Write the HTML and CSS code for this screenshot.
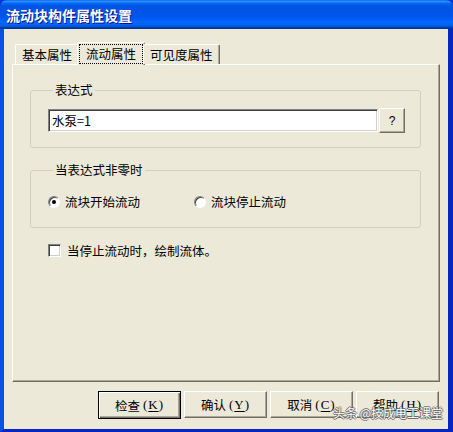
FILE: index.html
```html
<!DOCTYPE html>
<html lang="zh">
<head>
<meta charset="utf-8">
<link rel="stylesheet" href="styles.css">
</head>
<body>
<div class="window">
  <div class="titlebar"><span class="title">流动块构件属性设置</span></div>
  <div class="frame">
    <div class="client">
      <div class="tabs">
        <div class="tab">基本属性</div>
        <div class="tab active"><span class="focus">流动属性</span></div>
        <div class="tab">可见度属性</div>
      </div>
      <div class="panel">
        <fieldset class="group g1">
          <legend>表达式</legend>
          <div class="exprrow">
            <div class="input">水泵=1</div>
            <div class="btn qbtn">?</div>
          </div>
        </fieldset>
        <fieldset class="group g2">
          <legend>当表达式非零时</legend>
          <div class="radios">
            <div class="opt"><span class="radio checked"></span><span>流块开始流动</span></div>
            <div class="opt"><span class="radio"></span><span>流块停止流动</span></div>
          </div>
        </fieldset>
        <div class="opt check"><span class="box"></span><span>当停止流动时，绘制流体。</span></div>
      </div>
      <div class="buttons">
        <div class="btn cmd default">检查<span class="key">(<u>K</u>)</span></div>
        <div class="btn cmd">确认<span class="key">(<u>Y</u>)</span></div>
        <div class="btn cmd">取消<span class="key">(<u>C</u>)</span></div>
        <div class="btn cmd">帮助<span class="key">(<u>H</u>)</span></div>
      </div>
    </div>
  </div>
  <div class="watermark">头条 @技成电工课堂</div>
</div>
</body>
</html>
```

FILE: styles.css
```css
* { box-sizing: border-box; }
html, body { margin: 0; padding: 0; background: #0831d9; }
body { width: 453px; height: 432px; overflow: hidden; font-family: "Noto Sans CJK SC", "Noto Sans", sans-serif; font-size: 12px; color: #000; }

.window {
  position: relative;
  width: 453px;
  height: 432px;
  display: flex;
  flex-direction: column;
  border-radius: 7px 7px 0 0;
  overflow: hidden;
  background: #0831d9;
}

.titlebar {
  flex: none;
  height: 29px;
  display: flex;
  align-items: center;
  padding-left: 6px;
  background: linear-gradient(to bottom, #0058ee 0%, #3593ff 4%, #288eff 6%, #127dff 8%, #036ffc 10%, #0262ee 14%, #0057e5 20%, #0054e3 24%, #0055eb 56%, #005bf5 66%, #026afe 76%, #0062ef 86%, #0052d6 92%, #0040ab 94%, #003092 100%);
}
.title {
  color: #fff;
  font-weight: bold;
  font-size: 14px;
  line-height: 16px;
  text-shadow: 1px 1px 0 #0f1089;
  margin-top: 1px;
}

.frame {
  flex: 1;
  display: flex;
  border-left: 4px solid #0a50e6;
  border-right: 5px solid #0626c4;
  border-bottom: 3px solid #0626c4;
}

.client {
  flex: 1;
  display: flex;
  flex-direction: column;
  background: #ece9d8;
  padding: 13px 8px 0 8px;
}

.tabs {
  display: flex;
  align-items: flex-end;
  height: 22px;
  padding-left: 3px;
  position: relative;
  z-index: 1;
}
.tab {
  height: 20px;
  padding: 0 6px;
  line-height: 19px;
  font-size: 12.5px;
  background: #ece9d8;
  border-top: 1px solid #fff;
  border-left: 1px solid #fff;
  border-right: 1px solid #716f64;
  box-shadow: inset -1px 0 #aca899;
  border-radius: 2px 2px 0 0;
  white-space: nowrap;
}
.tab.active {
  height: 23px;
  margin: 0 -2px -1px -2px;
  padding: 1px 1px 1px 1px;
  line-height: 18px;
}
.focus {
  display: block;
  height: 20px;
  padding: 0 6px;
  border: 1px dotted #000;
}

.panel {
  flex: none;
  height: 318px;
  border-top: 1px solid #fff;
  border-left: 1px solid #fff;
  border-right: 1px solid #716f64;
  border-bottom: 1px solid #716f64;
  box-shadow: inset -1px -1px #aca899;
  padding-top: 18px;
}

.group {
  margin: 0 18px 0 17px;
  border: 1px solid #d0d0bf;
  border-radius: 3px;
  padding: 0;
}
.group legend {
  margin-left: 5px;
  padding: 0 2px;
  font-size: 12.5px;
  line-height: 14px;
}
.g1 { padding: 11px 15px 14px 17px; }
.g2 { margin-top: 15px; padding: 18px 10px 19px 17px; }

.exprrow {
  display: flex;
  align-items: center;
  height: 25px;
}
.input {
  flex: 1;
  height: 23px;
  background: #fff;
  border-top: 1px solid #808080;
  border-left: 1px solid #808080;
  border-right: 1px solid #fff;
  border-bottom: 1px solid #fff;
  box-shadow: inset 1px 1px #404040, inset -1px -1px #d4d0c8;
  padding: 2px 3px;
  line-height: 17px;
  font-size: 12.5px;
}

.btn {
  background: #ece9d8;
  border-top: 1px solid #fff;
  border-left: 1px solid #fff;
  border-right: 1px solid #716f64;
  border-bottom: 1px solid #716f64;
  box-shadow: inset -1px -1px #aca899;
  display: flex;
  align-items: center;
  justify-content: center;
}
.qbtn {
  width: 26px;
  height: 25px;
  margin-left: 1px;
  font-family: "Liberation Sans", sans-serif;
  font-size: 12px;
}

.radios {
  display: grid;
  grid-template-columns: 146px 146px;
  height: 13px;
}
.opt {
  display: flex;
  align-items: center;
  gap: 5px;
  height: 13px;
  line-height: 13px;
  font-size: 12.5px;
  white-space: nowrap;
}
.radio {
  position: relative;
  flex: none;
  width: 12px;
  height: 12px;
  border-radius: 50%;
  background: #fff;
  border: 1px solid;
  border-color: #808080 #fff #fff #808080;
  box-shadow: inset 1px 1px #404040;
}
.radio.checked::after {
  content: "";
  position: absolute;
  left: 3px;
  top: 3px;
  width: 4px;
  height: 4px;
  border-radius: 50%;
  background: #000;
}

.check {
  margin: 16px 0 0 35px;
  gap: 6px;
}
.box {
  flex: none;
  width: 13px;
  height: 13px;
  background: #fff;
  border-top: 1px solid #808080;
  border-left: 1px solid #808080;
  border-right: 1px solid #fff;
  border-bottom: 1px solid #fff;
  box-shadow: inset 1px 1px #404040, inset -1px -1px #d4d0c8;
}

.buttons {
  display: flex;
  justify-content: flex-end;
  gap: 3px;
  margin-top: 9px;
  padding-right: 1px;
}
.cmd {
  width: 83px;
  height: 27px;
  font-size: 12.5px;
  white-space: nowrap;
}
.cmd .key {
  margin-left: 3px;
  font-family: "Liberation Serif", serif;
  font-size: 13px;
  letter-spacing: 1px;
}
.cmd.default {
  height: 28px;
  border: 1px solid #000;
  box-shadow: inset 1px 1px #fff, inset -1px -1px #716f64, inset -2px -2px #aca899;
}
.cmd u { text-decoration-thickness: 1px; text-underline-offset: 2px; }

.watermark {
  position: absolute;
  right: 10px;
  bottom: 12px;
  color: #fff;
  font-size: 12px;
  line-height: 14px;
  text-shadow: -1px 0 #666, 1px 0 #666, 0 -1px #666, 0 1px #666;
  opacity: 0.9;
}
```
